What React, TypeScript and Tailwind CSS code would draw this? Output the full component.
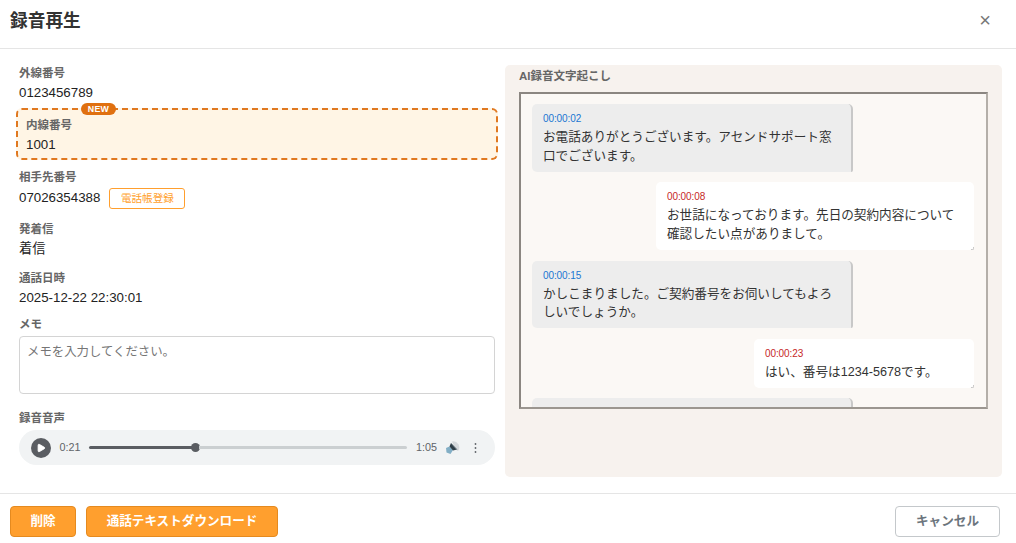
import type { ReactNode } from "react";
import { Play } from "lucide-react";

type Message = {
  time: string;
  text: string;
  speaker: "operator" | "customer";
};

const messages: Message[] = [
  {
    time: "00:00:02",
    text: "お電話ありがとうございます。アセンドサポート窓口でございます。",
    speaker: "operator",
  },
  {
    time: "00:00:08",
    text: "お世話になっております。先日の契約内容について確認したい点がありまして。",
    speaker: "customer",
  },
  {
    time: "00:00:15",
    text: "かしこまりました。ご契約番号をお伺いしてもよろしいでしょうか。",
    speaker: "operator",
  },
  {
    time: "00:00:23",
    text: "はい、番号は1234-5678です。",
    speaker: "customer",
  },
  // not transcribed yet
  {
    time: "",
    text: "",
    speaker: "operator",
  },
];

function Label({ children }: { children: ReactNode }) {
  return (
    <div className="h-[18px] pt-px text-[11.5px] leading-[18px] font-bold text-[#666]">
      {children}
    </div>
  );
}

function Value({ children }: { children: ReactNode }) {
  return (
    <div className="flex h-[21px] items-center pt-px text-[13.3px] leading-[21px] text-[#222]">
      {children}
    </div>
  );
}

function AudioPlayer() {
  return (
    <div className="mt-1 flex h-[35px] items-center rounded-full bg-[#f1f3f4] pr-4 pl-3 text-[10.8px] text-[#5f6368]">
      <button className="flex h-5 w-5 shrink-0 items-center justify-center rounded-full bg-[#5a5d62]">
        <Play className="h-2.5 w-2.5 fill-white text-white" />
      </button>
      <span className="ml-[8.5px]">0:21</span>
      <div className="mx-[8.5px] flex h-[9px] flex-1 items-center">
        <div className="h-[3.5px] w-1/3 rounded-full bg-[#5a5d62]" />
        <div className="-ml-1 h-[9px] w-[9px] rounded-full bg-[#5a5d62]" />
        <div className="-ml-px h-[3.5px] flex-1 rounded-r-full bg-[#cbcfd1]" />
      </div>
      <span>1:05</span>
      <svg className="ml-2 h-[15px] w-[15px]" viewBox="0 0 15 15">
        <path d="M7 1.5A6 6 0 0 1 13 11L10.5 9.5Z" fill="#d5d9dc" />
        <path d="M1 8 4.5 6.5 8 10 5.5 14 1.5 12.5Z" fill="#82aec5" />
        <path d="M4.5 6.5 6 3 12 9.5 8 10.5Z" fill="#2f3e48" />
        <path d="M6 3 12 9.5" stroke="#8d999f" strokeWidth="1" />
      </svg>
      <svg className="ml-[12px] h-3 w-[7px] fill-[#5f6368]" viewBox="0 0 7 12">
        <circle cx="3.5" cy="2" r="0.9" />
        <circle cx="3.5" cy="6" r="0.9" />
        <circle cx="3.5" cy="10" r="0.9" />
      </svg>
    </div>
  );
}

function Bubble({ message }: { message: Message }) {
  const isOperator = message.speaker === "operator";
  return (
    <div
      className={
        isOperator
          ? "w-[321px] shrink-0 self-start rounded-[5px] rounded-br-[2px] border-r-2 border-[#c8c8c8] bg-[#ededed] px-[11px] pt-[6px] pb-[6px]"
          : "relative max-w-[318px] min-w-[220px] shrink-0 self-end rounded-[5px] bg-white pt-[6px] pr-[17px] pb-[6px] pl-[11px]"
      }
    >
      <div
        className={
          isOperator
            ? "h-[18px] text-[10px] leading-[17px] tracking-[-0.1px] text-[#1976d2]"
            : "h-[18px] text-[10px] leading-[17px] tracking-[-0.1px] text-[#c62828]"
        }
      >
        {message.time}
      </div>
      <p className="text-[12.62px] leading-[18.75px] text-[#333]">
        {message.text}
      </p>
      {!isOperator && (
        <span className="absolute right-0 bottom-0 h-[3px] w-[3px] rounded-br-[2px] border-r border-b border-[#c8c8c8]" />
      )}
    </div>
  );
}

function Transcript() {
  return (
    <section className="h-[412px] w-[497px] rounded-[5px] bg-[#f7f2ee] px-[14px] pt-px">
      <Label>AI録音文字起こし</Label>
      <div className="mt-2 flex h-[317px] flex-col gap-[10.8px] overflow-hidden border-2 border-t-[#8b8681] border-r-[#b4afa9] border-b-[#9b9690] border-l-[#8b8681] bg-[#fbf8f5] pt-[10px] pr-3 pl-[11px]">
        {messages.map((message, index) => (
          <Bubble key={index} message={message} />
        ))}
      </div>
    </section>
  );
}

function App() {
  return (
    <div className="flex h-[543px] w-[1016px] flex-col overflow-hidden bg-white font-['Liberation_Sans','Noto_Sans_CJK_JP',sans-serif]">
      <header className="flex h-[49px] items-center justify-between border-b border-[#e5e5e5] pr-[25px] pb-[5px] pl-[10px]">
        <h1 className="text-[17.7px] font-bold text-[#333]">録音再生</h1>
        <button className="pb-1 text-[20px] leading-none text-[#777]">×</button>
      </header>

      <main className="flex h-[444px] justify-between pr-[14px] pl-[19px]">
        <div className="w-[476px] pt-[14px]">
          <Label>外線番号</Label>
          <Value>0123456789</Value>

          <div className="relative -mr-[3px] -ml-[3px] mt-[6px] h-[52px] rounded-[6px] border-2 border-dashed border-[#e07820] bg-[#fff5e5] px-2 pt-[5px]">
            <span className="absolute -top-[7px] left-[63px] h-3 w-[35px] rounded-full bg-[#e07010] text-center text-[8.8px] leading-3 font-bold tracking-[0.3px] text-white">
              NEW
            </span>
            <Label>内線番号</Label>
            <Value>1001</Value>
          </div>

          <div className="mt-[7px]">
            <Label>相手先番号</Label>
            <div className="flex h-[24px] items-center gap-[9px]">
              <Value>07026354388</Value>
              <button className="mt-[2px] h-[21px] w-[76px] rounded-[3px] border border-[#ff9f2e] text-[10.6px] leading-[19px] text-[#ff9f2e]">
                電話帳登録
              </button>
            </div>
          </div>

          <div className="mt-[10px]">
            <Label>発着信</Label>
            <Value>着信</Value>
          </div>

          <div className="mt-[10px]">
            <Label>通話日時</Label>
            <Value>2025-12-22 22:30:01</Value>
          </div>

          <div className="mt-[7px]">
            <Label>メモ</Label>
            <textarea
              className="mt-1 block h-[58px] w-full resize-none rounded-[4px] border border-[#d4d4d4] px-[7px] py-[6px] text-[12.4px] leading-[18px] placeholder:text-[#757575]"
              placeholder="メモを入力してください。"
            />
          </div>

          <div className="mt-[14px]">
            <Label>録音音声</Label>
            <AudioPlayer />
          </div>
        </div>

        <div className="pt-4">
          <Transcript />
        </div>
      </main>

      <footer className="flex h-[50px] items-start gap-[10px] border-t border-[#e5e5e5] pt-3 pr-4 pl-[10px] text-[12.6px] font-bold">
        <button className="h-[31px] w-[66px] rounded-[4px] border border-[#e58a1f] bg-[#ff9f2e] text-white">
          削除
        </button>
        <button className="h-[31px] w-[192px] rounded-[4px] border border-[#e58a1f] bg-[#ff9f2e] text-white">
          通話テキストダウンロード
        </button>
        <button className="ml-auto h-[31px] w-[105px] rounded-[4px] border border-[#c4c8cb] bg-white text-[#6c757d]">
          キャンセル
        </button>
      </footer>
    </div>
  );
}

export default App;
